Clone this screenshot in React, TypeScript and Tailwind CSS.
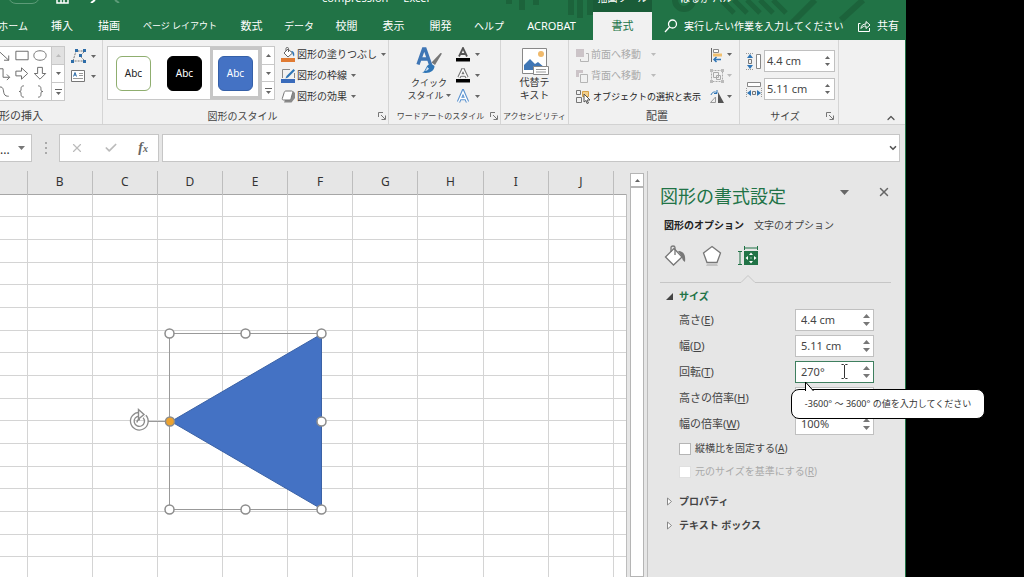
import React, { useState } from 'react';
import { ChevronDown, ChevronUp, Check, X } from 'lucide-react';
import clsx from 'clsx';

const TABS = [
  { label: 'ホーム', className: 'w-[38px] justify-end pr-2.5 text-[10px]' },
  { label: '挿入', className: 'w-12 text-[11px]' },
  { label: '描画', className: 'w-[46px] text-[11px]' },
  { label: 'ページ レイアウト', className: 'w-24 text-[9px]' },
  { label: '数式', className: 'w-[47px] text-[11px]' },
  { label: 'データ', className: 'w-12 text-[10px]' },
  { label: '校閲', className: 'w-[47px] text-[11px]' },
  { label: '表示', className: 'w-[47px] text-[11px]' },
  { label: '開発', className: 'w-[47px] text-[11px]' },
  { label: 'ヘルプ', className: 'w-[50px] text-[10px]' },
  { label: 'ACROBAT', className: 'w-[79px] pr-1 text-[11px]' },
];

const COLUMNS = ['B', 'C', 'D', 'E', 'F', 'G', 'H', 'I', 'J'];
const ROWS = Array.from({ length: 18 }, (_, i) => i + 1);

const Caret = ({ className = 'text-[#666]' }: { className?: string }) => (
  <svg width="5" height="3" viewBox="0 0 5 3" className={clsx('shrink-0', className)}>
    <path d="M0 0h5L2.5 3z" fill="currentColor" />
  </svg>
);

const CaretUp = ({ className = 'text-[#666]' }: { className?: string }) => (
  <svg width="5" height="3" viewBox="0 0 5 3" className={clsx('shrink-0', className)}>
    <path d="M0 3h5L2.5 0z" fill="currentColor" />
  </svg>
);

const SpinArrow = ({ up }: { up?: boolean }) => (
  <svg width="7" height="4" viewBox="0 0 7 4" className="shrink-0 text-[#777]">
    <path d={up ? 'M0 4h7L3.500 0z' : 'M0 0h7L3.500 4z'} fill="currentColor" />
  </svg>
);

const Launcher = ({ label }: { label: string }) => (
  <button aria-label={label} className="shrink-0 text-[#777]">
    <svg width="8" height="8" viewBox="0 0 8 8" fill="none" stroke="currentColor">
      <path d="M.5 5V.5H5M3 3l4 4M7.5 3.5v4h-4" />
    </svg>
  </button>
);

interface GroupProps {
  label: string;
  className: string;
  labelClass?: string;
  launcher?: boolean;
  children: React.ReactNode;
}

const Group = ({ label, className, labelClass = 'text-[10px]', launcher, children }: GroupProps) => (
  <section className={clsx('flex shrink-0 flex-col border-r border-[#d5d5d5] pt-1.5', className)}>
    <div className="flex h-[62px] items-start">{children}</div>
    <div className="flex h-4 items-center">
      <span className={clsx('flex-1 whitespace-nowrap text-center leading-4 text-[#444]', labelClass)}>{label}</span>
      {launcher && <Launcher label={`${label}の詳細`} />}
    </div>
  </section>
);

const GalleryScroll = ({ dimUp }: { dimUp?: boolean }) => (
  <div className="flex w-[13px] shrink-0 flex-col divide-y divide-[#c8c8c8] border-l border-[#c8c8c8]">
    <button aria-label="前の行" className={clsx('flex flex-1 items-center justify-center', dimUp && 'bg-[#e1e1e1]')}>
      <CaretUp className={dimUp ? 'text-[#bbb]' : 'text-[#666]'} />
    </button>
    <button aria-label="次の行" className="flex flex-1 items-center justify-center">
      <Caret />
    </button>
    <button aria-label="その他" className="flex flex-1 flex-col items-center justify-center gap-0.5">
      <span className="h-px w-[7px] bg-[#666]" />
      <Caret />
    </button>
  </div>
);

const SHAPES = [
  { name: '線矢印', d: 'M2 3l12 11M14 9v5H9' },
  { name: '正方形/長方形', d: 'M2.5 4.5h13v9h-13z' },
  { name: '楕円', d: 'M9 4c4 0 6.500 2 6.500 5s-2.500 5-6.500 5-6.500-2-6.500-5 2.500-5 6.500-5z' },
  { name: 'カギ線矢印', d: 'M3 4h5v9h7M12 10l3 3-3 3' },
  { name: '右矢印', d: 'M2.500 6.500h6v-3.500l6.500 6-6.500 6v-3.500h-6z' },
  { name: '下矢印', d: 'M6.500 2.500h5v6.500h3.500l-6 6-6-6h3.500z' },
  { name: '曲線', d: 'M2 5c7-3 6 3 7 6s3 3 5 3' },
  { name: '左中かっこ', d: 'M11 3c-2 0-3 1-3 3 0 2 0 3-2 3 2 0 2 1 2 3 0 2 1 3 3 3' },
  { name: '右中かっこ', d: 'M7 3c2 0 3 1 3 3 0 2 0 3 2 3-2 0-2 1-2 3 0 2-1 3-3 3' },
];

const ShapeGallery = () => (
  <div className="flex h-[55px] shrink-0 border border-[#c8c8c8] bg-white">
    <div className="grid grid-cols-3 pl-1.5 pr-0.5">
      {SHAPES.map((s) => (
        <button key={s.name} aria-label={s.name} className="w-[18px] text-[#666]">
          <svg width="18" height="17" viewBox="0 0 18 18" fill="none" stroke="currentColor">
            <path d={s.d} />
          </svg>
        </button>
      ))}
    </div>
    <GalleryScroll dimUp />
  </div>
);

const BucketIcon = () => (
  <svg width="15" height="15" viewBox="0 0 15 15" fill="none">
    <path d="M3 6l4-4 4.500 4-4.500 4z" fill="#fff" stroke="#666" />
    <path d="M5 4V1.500C5 0 7.500 0 7.500 1.500V5" stroke="#666" />
    <path d="M10 4c2.500 0 4 2 3 5.500-1-1-1.500-2-1.500-3.500z" fill="#2e75b6" />
    <path d="M0 11h14v4H0z" fill="#e07b33" />
  </svg>
);

const OutlineIcon = () => (
  <svg width="15" height="15" viewBox="0 0 15 15" fill="none">
    <path d="M9 1.500H1.500V10M13.500 5v5" stroke="#888" />
    <path d="M12.500 1l1.500 1.500-7 7-2.500 1 1-2.500z" fill="#2e75b6" />
    <path d="M0 11h14v4H0z" fill="#3a6bbb" />
  </svg>
);

const EffectIcon = () => (
  <svg width="15" height="15" viewBox="0 0 15 15" fill="none">
    <path d="M3 13.500h7.500L14 9V4l-2-2-8 9z" fill="#8a8a8a" />
    <path
      d="M5 2h5.500c1 0 1.500.7 1.200 1.500l-1.700 6c-.3 1-.8 1.500-1.800 1.500H2.700C1.700 11 1 10.500 1.300 9.500l1.900-6C3.500 2.500 4 2 5 2z"
      fill="#fff"
      stroke="#777"
    />
  </svg>
);

const StyleButton = ({ icon, label }: { icon: React.ReactNode; label: string }) => (
  <button className="flex h-[21px] items-center whitespace-nowrap text-[10px] text-[#333]">
    {icon}
    <span className="ml-px mr-1">{label}</span>
    <Caret />
  </button>
);

const SWATCHES = [
  { id: 'white', box: 'border-[#8fae6f] bg-white text-[#222]' },
  { id: 'black', box: 'border-black bg-black text-white' },
  { id: 'blue', box: 'border-[#3560a8] bg-[#4472c4] text-white' },
];

const StyleGallery = () => {
  const [selected, setSelected] = useState('blue');
  return (
    <div className="flex h-[54px] border border-[#c8c8c8] bg-white">
      {SWATCHES.map((s) => (
        <button
          key={s.id}
          onClick={() => setSelected(s.id)}
          className={clsx(
            'flex w-[51px] items-center justify-center border-[3px]',
            selected === s.id ? 'border-[#c6c6c6]' : 'border-transparent',
          )}
        >
          <span className={clsx('flex size-[35px] items-center justify-center rounded-md border text-[10px]', s.box)}>
            Abc
          </span>
        </button>
      ))}
      <GalleryScroll />
    </div>
  );
};

const QuickStyleIcon = () => (
  <svg width="28" height="30" viewBox="0 0 28 30" fill="none">
    <path d="M3 18.500L8.500 3h1.500L15.500 18.500M5 13h9" stroke="#3f76b5" strokeWidth="3.400" />
    <path d="M27 7.500l-7 11.500-3.500-2.500 9-9.500z" fill="#777" />
    <path d="M16 17.500l3.500 2.500c0 5-5 8-12.500 6.500 4.500-1 2.500-7 9-9z" fill="#2e75b6" />
    <path d="M12 21c-.5 2-1 3-2 4 2-.2 3-1 4-2.500z" fill="#cfe0f2" />
  </svg>
);

const TextEffectButton = ({ label, bar, outline }: { label: string; bar?: boolean; outline?: string }) => (
  <button aria-label={label} className="flex h-[21px] items-center gap-1">
    <svg width="16" height="16" viewBox="0 0 16 16" fill="none">
      <path
        d={bar ? 'M4 9.500L8 1l4 8.500M5.500 7h5' : 'M3.500 13L8 2.500l4.500 10.500M5 9.500h6'}
        stroke={outline ?? '#555'}
        strokeWidth={outline ? 3.4 : 1.8}
      />
      {outline && (
        <path
          d={bar ? 'M4 9.500L8 1.500l4 8M5.500 7h5' : 'M3.500 13L8 3l4.500 10M5 9.500h6'}
          stroke="#fff"
          strokeWidth="1.400"
        />
      )}
      {bar && <path d="M1 11h14v3.500H1z" fill="#000" />}
    </svg>
    <Caret />
  </button>
);

const AltTextIcon = () => (
  <svg width="28" height="30" viewBox="0 0 28 30" fill="none">
    <path d="M1.500 2.500h24v25h-24z" fill="#fff" stroke="#888" />
    <circle cx="20" cy="8" r="3" fill="#f0b96b" />
    <path d="M3 24v-5l6-6 5 5 3-2 7 6v2z" fill="#3f76b5" />
    <path d="M12.500 20.500h15v8h-15z" fill="#fff" stroke="#888" />
    <path d="M15 23.500h10M15 26h10" stroke="#999" />
  </svg>
);

const ForwardIcon = () => (
  <svg width="14" height="14" viewBox="0 0 14 14" fill="none">
    <path d="M1 1h8v8H1z" fill="#ccc4c8" />
    <path d="M11 5.500h2.500v8h-8V11" stroke="#b5b5b5" />
  </svg>
);

const BackwardIcon = () => (
  <svg width="14" height="14" viewBox="0 0 14 14" fill="none">
    <path d="M1 1h7v3H4v4H1z" fill="#ccc4c8" />
    <path d="M5.500 5.500h7v8h-7z" stroke="#b5b5b5" />
  </svg>
);

const SelectionPaneIcon = () => (
  <svg width="16" height="15" viewBox="0 0 16 15" fill="none">
    <path d="M1.500 1.500h4v4h-4zM1.500 8.500h5v5h-5z" stroke="#777" />
    <path d="M7.500 2.500h6v5h-6z" fill="#f3d08c" stroke="#d8a34b" />
    <path d="M9 5l6 6h-3l1.500 3-1.500.5-1-3-2 1.500z" fill="#fff" stroke="#555" />
  </svg>
);

const AlignIcon = () => (
  <svg width="16" height="16" viewBox="0 0 16 16" fill="none">
    <path d="M2.500 1v14" stroke="#666" />
    <path d="M4.500 2.500h5v3h-5z" fill="#fff" stroke="#888" />
    <path d="M4 6.500h9v3H4z" fill="#f0c070" />
    <path d="M12 12.500H5M7.500 10L5 12.500 7.500 15" stroke="#2e75b6" strokeWidth="1.500" />
  </svg>
);

const GroupIcon = () => (
  <svg width="16" height="16" viewBox="0 0 16 16" fill="none" stroke="#aaa">
    <path d="M2.500 2.500h11v11h-11z" strokeDasharray="2 1" />
    <path d="M4.500 4.500h5v5h-5zM7.500 7.500h4v4h-4z" />
    <path d="M1 1h3v3H1zM12 1h3v3h-3zM1 12h3v3H1zM12 12h3v3h-3z" fill="#bbb" stroke="none" />
  </svg>
);

const RotateIcon = () => (
  <svg width="16" height="16" viewBox="0 0 16 16" fill="none">
    <path d="M1.500 13.500h5V8z" stroke="#999" />
    <path d="M9 3v11h6z" fill="#555" />
    <path d="M2 6c1-3 4-4 6-2M8 1v3.500H5" stroke="#2e75b6" />
  </svg>
);

const HeightIcon = () => (
  <svg width="16" height="17" viewBox="0 0 16 17" fill="none">
    <path d="M10.500 1.500h4v14h-4z" fill="#fff" stroke="#888" />
    <path d="M2.500 6.500h3v4h-3z" stroke="#777" />
    <path d="M4 1l3 4H1zM4 16l3-4H1z" fill="#2e75b6" />
    <path d="M0 .5h8M0 16.500h8" stroke="#999" strokeDasharray="1 1" />
  </svg>
);

const WidthIcon = () => (
  <svg width="16" height="17" viewBox="0 0 16 17" fill="none">
    <path d="M1.500 1.500h13v4h-13z" fill="#fff" stroke="#888" />
    <path d="M6.500 10.500h3v3h-3z" stroke="#777" />
    <path d="M1 12l4-3v6zM15 12l-4-3v6z" fill="#2e75b6" />
    <path d="M.5 7v9M15.500 7v9" stroke="#999" strokeDasharray="1 1" />
  </svg>
);

interface SpinFieldProps {
  id: string;
  initial: string;
  active?: boolean;
  small?: boolean;
  className?: string;
}

const SpinField = ({ id, initial, active, small, className }: SpinFieldProps) => {
  const [value, setValue] = useState(initial);
  return (
    <div className={clsx('flex h-[22px] border bg-white', active ? 'border-[#3f7f5f]' : 'border-[#c0c0c0]', className)}>
      <input
        id={id}
        value={value}
        onChange={(e) => setValue(e.target.value)}
        className="w-full min-w-0 flex-1 bg-transparent text-[11px] text-[#444] outline-none"
      />
      <div className="flex w-3.5 flex-col items-center justify-center gap-1">
        <button aria-label="増やす" className="flex">
          {small ? <CaretUp /> : <SpinArrow up />}
        </button>
        <button aria-label="減らす" className="flex">
          {small ? <Caret /> : <SpinArrow />}
        </button>
      </div>
    </div>
  );
};

const TitleBar = () => (
  <header className="relative shrink-0 overflow-hidden bg-[#217346] text-white">
    <svg width="430" height="40" viewBox="0 0 430 40" fill="none" className="absolute right-0 top-0">
      <path d="M34 0v4M47 0v10M61 0v5M96 0v15M105 0v18M115 0v15" stroke="#1c633b" strokeWidth="6" />
      <circle cx="209" cy="0" r="9" stroke="#1c633b" strokeWidth="6" />
      <path d="M246 0l13 13M259 0l13 13M272 0l13 13M285 0l13 13M298 0l13 13" stroke="#1c633b" strokeWidth="5" />
      <path d="M340 0l-24 24M388 0l-22 20" stroke="#1c633b" strokeWidth="6" />
    </svg>
    <div className="relative flex h-3 items-end">
      <div className="flex h-3 w-[322px] items-start pl-2">
        <span className="-mt-3 mr-4 h-4 w-8 rounded-full border border-[#5d9b78]" />
        <svg width="13" height="4" viewBox="0 0 13 4" className="mr-5">
          <path d="M1 0v3h11V0M5 0v3M8 0v3" stroke="#fff" strokeWidth="1.500" fill="none" />
        </svg>
        <svg width="8" height="3" viewBox="0 0 8 3" className="mr-4">
          <path d="M6 0L2 3" stroke="#fff" strokeWidth="2" />
        </svg>
        <svg width="8" height="3" viewBox="0 0 8 3">
          <path d="M2 0l4 3" stroke="#5d9b78" strokeWidth="2" />
        </svg>
      </div>
      <span className="w-[271px] whitespace-pre pb-1.5 text-[11px] leading-4">compression  -  Excel</span>
      <span className="flex h-full w-[59px] items-end justify-center bg-[#1a5c38] pb-1.5 text-[10px] leading-4">
        描画ツール
      </span>
      <span className="pb-1.5 pl-7 text-[10px] leading-4">はるか パル</span>
    </div>
    <nav className="relative flex h-7 items-stretch">
      {TABS.map((tab) => (
        <button
          key={tab.label}
          className={clsx('flex shrink-0 items-center justify-center whitespace-nowrap', tab.className)}
        >
          {tab.label}
        </button>
      ))}
      <button className="w-[59px] shrink-0 bg-[#f1f1f1] text-[11px] text-[#217346]">書式</button>
      <button className="ml-3 flex items-center gap-1.5 whitespace-nowrap text-[10px]">
        <svg width="14" height="14" viewBox="0 0 14 14" fill="none" stroke="currentColor" strokeWidth="1.300">
          <circle cx="8.500" cy="5" r="4" />
          <path d="M5.500 8L1 13" />
        </svg>
        実行したい作業を入力してください
      </button>
      <button className="ml-auto flex items-center gap-1.5 whitespace-nowrap pr-1.5 text-[11px]">
        <svg width="14" height="14" viewBox="0 0 14 14" fill="none" stroke="currentColor">
          <path d="M3.500 4.500h-2v8h11V9" />
          <path d="M4 9.500c0-3 2-4.500 5-4.500V2.500L13 6 9 9.500V7C7 7 5.500 7.500 4 9.500z" />
        </svg>
        共有
      </button>
    </nav>
  </header>
);

const Ribbon = () => (
  <div className="shrink-0 overflow-hidden border-b border-[#d2d2d2] bg-[#f1f1f1]">
    <div className="-ml-3 flex h-[84px]">
      <Group label="図形の挿入" className="w-[115px]" labelClass="pr-[59px] text-[11px]">
        <div className="flex gap-1.5">
          <ShapeGallery />
          <div className="flex flex-col">
            <button aria-label="図形の編集" className="flex h-5 items-center gap-1">
              <svg width="16" height="14" viewBox="0 0 16 14" fill="none">
                <path d="M2 12L5 2h9l-5 5 5 5z" stroke="#777" strokeDasharray="2 1" />
                <path d="M4 0h3v3H4zM12 0h3v3h-3zM0 11h3v3H0zM12 11h3v3h-3zM8 5h3v3H8z" fill="#2e6da8" />
              </svg>
              <Caret />
            </button>
            <button aria-label="テキスト ボックス" className="flex h-5 items-center gap-1.5">
              <svg width="14" height="12" viewBox="0 0 14 12" fill="none">
                <path d="M.5.5h13v11H.5z" fill="#fff" stroke="#777" />
                <path d="M2.500 6.500l1.500-4 1.500 4M3 5h2" stroke="#2e6da8" />
                <path d="M8 3.500h4M8 5.500h4M2 8.500h10" stroke="#999" />
              </svg>
              <Caret />
            </button>
          </div>
        </div>
      </Group>

      <Group label="図形のスタイル" className="w-[286px] pl-1 pr-0.5" launcher>
        <StyleGallery />
        <div className="-mt-0.5 ml-1.5 flex flex-col items-start">
          <StyleButton icon={<BucketIcon />} label="図形の塗りつぶし" />
          <StyleButton icon={<OutlineIcon />} label="図形の枠線" />
          <StyleButton icon={<EffectIcon />} label="図形の効果" />
        </div>
      </Group>

      <Group label="ワードアートのスタイル" className="w-28 px-0.5" labelClass="text-[8px]" launcher>
        <button className="flex w-[60px] flex-col items-center pl-4 text-[9px] leading-[13px] text-[#333]">
          <QuickStyleIcon />
          <span className="whitespace-nowrap">クイック</span>
          <span className="flex items-center gap-0.5 whitespace-nowrap">
            スタイル
            <Caret />
          </span>
        </button>
        <div className="-mt-0.5 ml-1 flex flex-col">
          <TextEffectButton label="文字の塗りつぶし" bar />
          <TextEffectButton label="文字の輪郭" bar outline="#777" />
          <TextEffectButton label="文字の効果" outline="#5b93d0" />
        </div>
      </Group>

      <Group label="アクセシビリティ" className="w-[68px]" labelClass="text-[8px]">
        <button className="flex w-full flex-col items-center text-[10px] leading-[13px] text-[#333]">
          <AltTextIcon />
          <span>代替テ</span>
          <span>キスト</span>
        </button>
      </Group>

      <Group label="配置" className="w-[171px] pl-1.5" labelClass="text-[11px]">
        <div className="-mt-0.5 flex w-[134px] flex-col">
          <button disabled className="flex h-[21px] items-center gap-0.5 text-[10px] text-[#aaa]">
            <ForwardIcon />
            前面へ移動
            <Caret className="ml-2 text-[#bbb]" />
          </button>
          <button disabled className="flex h-[21px] items-center gap-0.5 text-[10px] text-[#aaa]">
            <BackwardIcon />
            背面へ移動
            <Caret className="ml-2 text-[#bbb]" />
          </button>
          <button className="flex h-[21px] items-center gap-0.5 whitespace-nowrap text-[9px] text-[#222]">
            <SelectionPaneIcon />
            オブジェクトの選択と表示
          </button>
        </div>
        <div className="-mt-0.5 flex flex-col">
          <button aria-label="配置" className="flex h-[21px] items-center gap-0.5">
            <AlignIcon />
            <Caret />
          </button>
          <button aria-label="グループ化" disabled className="flex h-[21px] items-center gap-0.5">
            <GroupIcon />
            <Caret className="text-[#bbb]" />
          </button>
          <button aria-label="回転" className="flex h-[21px] items-center gap-0.5">
            <RotateIcon />
            <Caret />
          </button>
        </div>
      </Group>

      <Group label="サイズ" className="w-[99px] px-1" labelClass="text-[10px]" launcher>
        <div className="flex flex-col gap-1.5 pl-0.5 pt-1">
          <div className="flex items-center gap-0.5">
            <label htmlFor="ribbon-height" aria-label="高さ">
              <HeightIcon />
            </label>
            <SpinField id="ribbon-height" initial="4.4 cm" small className="w-[71px] pl-0.5" />
          </div>
          <div className="flex items-center gap-0.5">
            <label htmlFor="ribbon-width" aria-label="幅">
              <WidthIcon />
            </label>
            <SpinField id="ribbon-width" initial="5.11 cm" small className="w-[71px] pl-0.5" />
          </div>
        </div>
      </Group>

      <button aria-label="リボンを折りたたむ" className="ml-auto self-end pr-2 text-[#555]">
        <ChevronUp size={12} strokeWidth={2.5} />
      </button>
    </div>
  </div>
);

const FormulaBar = () => (
  <div className="flex h-[46px] shrink-0 items-start pr-[5px] pt-[9px]">
    <button
      aria-label="名前ボックス"
      className="flex h-7 w-8 items-center justify-between border border-l-0 border-[#c6c6c6] bg-white pr-1.5 text-xs text-[#333]"
    >
      <span className="pt-1">...</span>
      <svg width="7" height="4" viewBox="0 0 7 4">
        <path d="M0 0h7L3.500 4z" fill="#777" />
      </svg>
    </button>
    <div className="flex h-7 w-[27px] flex-col items-center justify-center gap-[3px]">
      <span className="size-0.5 bg-[#aaa]" />
      <span className="size-0.5 bg-[#aaa]" />
      <span className="size-0.5 bg-[#aaa]" />
    </div>
    <div className="flex h-7 w-[100px] items-center justify-around border border-[#c6c6c6] bg-white">
      <button aria-label="キャンセル" className="text-[#bbb]">
        <X size={14} />
      </button>
      <button aria-label="入力" className="text-[#bbb]">
        <Check size={14} strokeWidth={3} />
      </button>
      <button
        aria-label="関数の挿入"
        className="font-['Liberation_Serif',serif] text-sm font-bold italic text-[#666]"
      >
        f<span className="text-[10px]">x</span>
      </button>
    </div>
    <div className="ml-[3px] flex h-7 flex-1 items-center border border-[#c6c6c6] bg-white pr-px">
      <input aria-label="数式バー" className="min-w-0 flex-1 bg-transparent px-2 text-xs outline-none" />
      <button aria-label="数式バーの展開" className="text-[#555]">
        <ChevronDown size={10} strokeWidth={4} />
      </button>
    </div>
  </div>
);

const HANDLES = [
  [169, 162],
  [245, 162],
  [321, 162],
  [321, 250],
  [169, 338],
  [245, 338],
  [321, 338],
];

const SelectedShape = () => (
  <svg width="340" height="360" viewBox="0 0 340 360" fill="none" className="absolute left-0 top-0">
    <path d="M169.500 162.500h152v176h-152zM148 250.500h22" stroke="#999" />
    <path d="M171 250.500L321.500 163v175z" fill="#4472c4" stroke="#3b62a6" />
    {HANDLES.map(([x, y]) => (
      <circle key={`${x}-${y}`} cx={x + 0.5} cy={y + 0.5} r="4.500" fill="#fff" stroke="#8c8c8c" strokeWidth="1.500" />
    ))}
    <circle cx="170" cy="250.500" r="4.500" fill="#eda32f" stroke="#8c8c8c" strokeWidth="1.500" />
    <path d="M144.500 245.500a7 7 0 1 1-5-2.300" stroke="#8c8c8c" strokeWidth="5" />
    <path d="M144.500 245.500a7 7 0 1 1-5-2.300" stroke="#fff" strokeWidth="2.400" />
    <path d="M138.500 238.500l5.500 5-5.500 4.500z" fill="#fff" stroke="#8c8c8c" strokeWidth="1.400" />
    <path d="M137 251.500c0-2 1-3 3-3" stroke="#8c8c8c" strokeWidth="1.400" />
  </svg>
);

const Sheet = () => (
  <main className="relative flex-1 overflow-hidden">
    <table className="w-full table-fixed border-collapse">
      <thead>
        <tr className="h-[23px] border-b border-[#a6a6a6] bg-[#e6e6e6] text-xs text-[#333]">
          <th className="w-[27px] border-r border-[#bdbdbd]" />
          {COLUMNS.map((c) => (
            <th key={c} className="border-r border-[#bdbdbd] p-0 font-normal leading-5">
              {c}
            </th>
          ))}
          <th className="w-[13px]" />
        </tr>
      </thead>
      <tbody className="bg-white">
        {ROWS.map((r) => (
          <tr key={r} className="h-[23px] border-b border-[#d4d4d4] nth-[3n+1]:h-[22px]">
            <td className="border-r border-[#d4d4d4]" />
            {COLUMNS.map((c) => (
              <td key={c} className="border-r border-[#d4d4d4]" />
            ))}
            <td className="border-r border-[#bdbdbd]" />
          </tr>
        ))}
      </tbody>
    </table>
    <SelectedShape />
  </main>
);

const VerticalScroll = () => (
  <div className="mx-[3px] flex w-3.5 shrink-0 flex-col pt-0.5">
    <button
      aria-label="上へスクロール"
      className="flex h-3.5 items-center justify-center border border-[#b5b5b5] bg-white"
    >
      <CaretUp />
    </button>
    <div className="flex-1 border border-[#b5b5b5] bg-white" />
  </div>
);

const FillTabIcon = () => (
  <svg width="22" height="22" viewBox="0 0 22 22" fill="none">
    <path d="M1.500 12L10 3.500 18 12l-8.500 8z" fill="#fff" stroke="#777" strokeWidth="1.300" />
    <path d="M7 7V2.500C7 .5 11 .5 11 2.500V10" stroke="#777" strokeWidth="1.300" />
    <path d="M14 6c5 0 8 3 7 11-2-1-3-3-3-5z" fill="#777" />
  </svg>
);

const PentagonIcon = () => (
  <svg width="20" height="22" viewBox="0 0 20 22" fill="none">
    <path d="M10 1.500l8.500 6.500-3.500 9.500H5L1.500 8z" fill="#fff" stroke="#777" strokeWidth="1.300" />
    <path d="M4 21l1-2h10l1 2z" fill="#c4c4c4" />
  </svg>
);

const SizeTabIcon = () => (
  <svg width="20" height="22" viewBox="0 0 20 22" fill="none">
    <path d="M6 6h14v14H6z" fill="#217346" />
    <path d="M6.500 1v4M19.500 1v4M7 3h12M0 6.500h4M0 19.500h4M2 7v12" stroke="#217346" />
    <path
      d="M13 7.500l2 2.500h-4zM13 18.500l2-2.500h-4zM7.500 13l2.500-2v4zM18.500 13L16 11v4zM12.500 12.500h1v1h-1z"
      fill="#fff"
    />
  </svg>
);

const InputTip = () => (
  <div
    role="tooltip"
    className="absolute -left-1 top-7 z-10 flex h-[30px] w-[194px] items-center justify-center whitespace-nowrap rounded-lg border border-black bg-white text-[9px] text-[#333]"
  >
    <svg width="14" height="10" viewBox="0 0 14 10" className="absolute -top-[9px] left-3">
      <path d="M1.500 10V1l8 9" fill="#fff" stroke="#000" />
    </svg>
    -3600° ～ 3600° の値を入力してください
  </div>
);

const FIELDS = [
  { id: 'height', label: '高さ', shortcut: 'E', value: '4.4 cm' },
  { id: 'width', label: '幅', shortcut: 'D', value: '5.11 cm' },
  { id: 'rotation', label: '回転', shortcut: 'T', value: '270°' },
  { id: 'scale-height', label: '高さの倍率', shortcut: 'H', value: '100%' },
  { id: 'scale-width', label: '幅の倍率', shortcut: 'W', value: '100%' },
];

const FormatPane = () => {
  const [locked, setLocked] = useState(false);
  return (
    <aside className="w-[258px] shrink-0 border-l border-[#bdbdbd] pl-3 pr-3.5 text-[#444]">
      <div className="flex h-[42px] items-center justify-between pt-2">
        <h2 className="whitespace-nowrap text-lg leading-6 text-[#217346]">図形の書式設定</h2>
        <div className="flex items-center gap-7 pb-2 text-[#666]">
          <button aria-label="作業ウィンドウ オプション">
            <svg width="9" height="5" viewBox="0 0 9 5">
              <path d="M0 0h9L4.500 5z" fill="currentColor" />
            </svg>
          </button>
          <button aria-label="閉じる">
            <X size={14} strokeWidth={2.5} />
          </button>
        </div>
      </div>
      <div className="flex h-6 items-center gap-2.5 whitespace-nowrap pl-1 text-[10px]">
        <button className="font-bold text-[#222]">図形のオプション</button>
        <button>文字のオプション</button>
      </div>
      <div className="flex h-[38px] items-center gap-4 pl-1">
        <button aria-label="塗りつぶしと線">
          <FillTabIcon />
        </button>
        <button aria-label="効果">
          <PentagonIcon />
        </button>
        <button aria-label="サイズとプロパティ">
          <SizeTabIcon />
        </button>
      </div>
      <div className="flex h-2 items-end">
        <span className="h-px w-[81px] bg-[#c6c6c6]" />
        <svg width="14" height="8" viewBox="0 0 14 8" fill="none" stroke="#c6c6c6">
          <path d="M0 7.500l7-7 7 7" />
        </svg>
        <span className="h-px flex-1 bg-[#c6c6c6]" />
      </div>

      <button className="mt-0.5 flex h-[22px] items-center gap-1.5 pl-1.5 text-[10px] font-bold text-[#217346]">
        <svg width="7" height="7" viewBox="0 0 7 7">
          <path d="M7 0v7H0z" fill="#444" />
        </svg>
        サイズ
      </button>
      <div className="pl-[19px] pr-[17px]">
        {FIELDS.map((f) => (
          <div key={f.id} className="flex h-[26px] items-center justify-between">
            <label htmlFor={f.id} className="whitespace-nowrap text-[11px]">
              {f.label}(<u>{f.shortcut}</u>)
            </label>
            <div className="relative">
              <SpinField id={f.id} initial={f.value} active={f.id === 'rotation'} className="w-[79px] pl-[5px]" />
              {f.id === 'rotation' && (
                <>
                  <svg
                    width="7"
                    height="15"
                    viewBox="0 0 7 15"
                    fill="none"
                    stroke="#333"
                    className="absolute left-[46px] top-[3px]"
                  >
                    <path d="M.5.5h2l1 1 1-1h2M3.500 1v13M.5 14.500h2l1-1 1 1h2" />
                  </svg>
                  <InputTip />
                </>
              )}
            </div>
          </div>
        ))}
        <label className="flex h-[23px] items-center gap-1 whitespace-nowrap text-[10px]">
          <input
            type="checkbox"
            checked={locked}
            onChange={(e) => setLocked(e.target.checked)}
            className="size-3 appearance-none border border-[#b5b5b5] bg-white checked:bg-[#217346]"
          />
          <span>
            縦横比を固定する(<u>A</u>)
          </span>
        </label>
        <label className="flex h-[23px] items-center gap-1 whitespace-nowrap text-[10px] text-[#aaa]">
          <input type="checkbox" disabled className="size-3 appearance-none border border-[#e0e0e0] bg-white" />
          <span>
            元のサイズを基準にする(<u>R</u>)
          </span>
        </label>
      </div>
      <div className="mt-1.5 flex flex-col">
        {['プロパティ', 'テキスト ボックス'].map((name) => (
          <button
            key={name}
            className="flex h-6 items-center gap-1.5 whitespace-nowrap pl-1.5 text-[10px] font-bold"
          >
            <svg width="7" height="9" viewBox="0 0 7 9" fill="#fff" stroke="#888">
              <path d="M1.500 1v7l4-3.500z" />
            </svg>
            {name}
          </button>
        ))}
      </div>
    </aside>
  );
};

export default function App() {
  return (
    <div className="flex h-screen overflow-hidden bg-black font-['Noto_Sans','Noto_Sans_CJK_JP',sans-serif]">
      <div className="flex min-w-0 flex-1 flex-col border-r border-[#217346] bg-[#e6e6e6]">
        <TitleBar />
        <Ribbon />
        <FormulaBar />
        <div className="flex min-h-0 flex-1">
          <Sheet />
          <VerticalScroll />
          <FormatPane />
        </div>
      </div>
      <div className="w-[118px] shrink-0" />
    </div>
  );
}
